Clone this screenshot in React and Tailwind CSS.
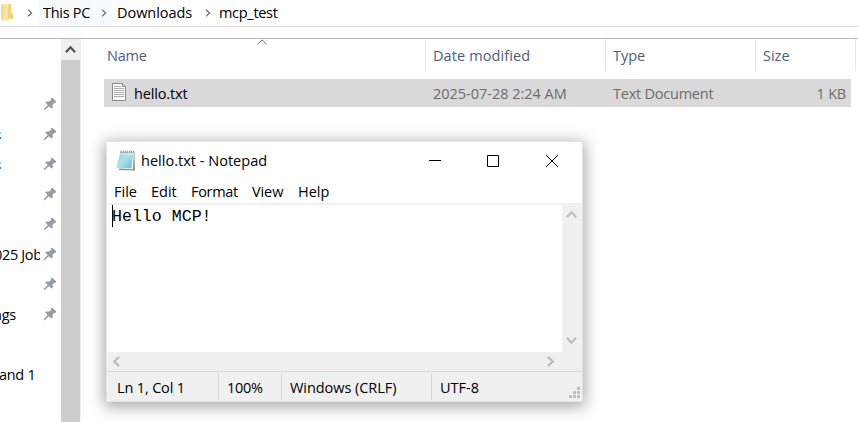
import React from "react";

const ui = "font-['Open_Sans','Noto_Sans',sans-serif]";

function Chevron({ dir = "right", size = 8, color = "#6b6b6b", w = 1.6 }) {
  const rot = { right: 0, down: 90, left: 180, up: 270 }[dir];
  return (
    <svg width={size} height={size} viewBox="0 0 10 10" className="block shrink-0" fill="none">
      <path d="M2.6 0.8 L7 5 L2.6 9.2" stroke={color} strokeWidth={w} transform={`rotate(${rot} 5 5)`} />
    </svg>
  );
}

function Pin() {
  return (
    <svg width="14" height="14" viewBox="0 0 14 14" className="block shrink-0">
      <path
        fill="#929da6"
        d="M9 0.5 L13.3 4.6 L12.4 5.9 L11.3 5.8 L9.6 7.7 L9.8 10.4 L8.5 11.5 L5.9 9.2 L1.8 13 L0.7 13.2 L0.9 12 L4.7 8 L2.3 5.6 L3.5 4.4 L6.2 4.5 L8 2.9 L7.8 1.7 Z"
      />
    </svg>
  );
}

function DocIcon() {
  return (
    <svg width="16" height="20" viewBox="0 0 16 20" className="block shrink-0">
      <path d="M1.5 1.5 H11.5 L14.5 4.5 V18.5 H1.5 Z" fill="#fafafa" stroke="#8b8b8b" />
      <path d="M11.5 1.5 V4.5 H14.5" fill="#e4e4e4" stroke="#8b8b8b" />
      <path d="M3 4.5 H10 M3 6.5 H13 M3 8.5 H13 M3 10.5 H13 M3 12.5 H13 M3 14.5 H13" stroke="#adadad" />
    </svg>
  );
}

function NotepadIcon() {
  return (
    <svg width="20" height="21" viewBox="0 0 20 21" className="block shrink-0">
      <defs>
        <linearGradient id="pad" x1="0" y1="0" x2="1" y2="1">
          <stop offset="0" stopColor="#86c8d9" />
          <stop offset="0.45" stopColor="#b0e2ec" />
          <stop offset="1" stopColor="#6dbbcd" />
        </linearGradient>
      </defs>
      <path d="M6 2 H18.4 L19 20.5 L3 20 Z" fill="#9a8c6c" />
      <path d="M4.5 2 H18 L17 19.3 L1 18.6 Z" fill="#e9eeea" />
      <path d="M4.5 2 H17.3 L15.2 18.2 L0.3 17.6 Z" fill="url(#pad)" />
      <path d="M4.4 4 H17" stroke="#dff4f7" strokeWidth="1" />
      <path d="M4.5 1.7 H18" stroke="#7a8286" strokeWidth="2" strokeDasharray="1 1.1" />
    </svg>
  );
}

const pinned = ["", "", "", "", "", "025 Job", "", "ngs"];

function Sidebar() {
  return (
    <nav className="relative flex w-[61px] shrink-0 flex-col overflow-hidden pt-[50px]">
      {pinned.map((t, i) => (
        <div key={i} className="flex h-[30px] items-center">
          <div className="flex h-[30px] w-[40px] shrink-0 items-center overflow-hidden pt-[2px]">
            {(i === 1 || i === 2) && (
              <span className="flex flex-col gap-[3px]">
                <i className="block h-[2px] w-[1px] bg-[#7dd0f5]" />
                <i className="block h-[2px] w-[1px] bg-[#1583d8]" />
              </span>
            )}
            {t === "025 Job" && <span className="-ml-[6px] whitespace-nowrap tracking-[-0.35px]">{t}</span>}
            {t === "ngs" && <span className="-ml-[7px] whitespace-nowrap tracking-[-0.2px]">{t}</span>}
          </div>
          <div className="ml-[3px]"><Pin /></div>
        </div>
      ))}
      <div className="mt-[31px] -ml-px flex h-[30px] items-center whitespace-nowrap tracking-[-0.3px]">and 1</div>
    </nav>
  );
}

function Notepad() {
  return (
    <section className="absolute left-[106px] top-[141px] flex h-[261px] w-[477px] flex-col border border-[#e4e4e4] bg-[#f0f0f0] text-black shadow-[0_3px_14px_2px_rgba(0,0,0,0.34)]">
      <header className="flex h-[37px] shrink-0 items-center bg-white pl-[9px]">
        <NotepadIcon />
        <span className="ml-[5px] w-[288px] whitespace-nowrap tracking-[0.02px]">hello.txt - Notepad</span>
        <svg width="130" height="13" viewBox="0 0 130 13" className="-mt-px block shrink-0" fill="none" stroke="#000">
          <path d="M0 6.5 H12" />
          <path d="M58.5 1.5 H69.5 V12.5 H58.5 Z" />
          <path d="M117 1 L129 13 M129 1 L117 13" />
        </svg>
      </header>
      <div className="flex h-[24px] shrink-0 items-center whitespace-nowrap bg-white pl-[7px] pt-[2px]">
        <span className="w-[37px] tracking-[0px]">File</span>
        <span className="w-[40px] tracking-[0px]">Edit</span>
        <span className="w-[61px] tracking-[-0.3px]">Format</span>
        <span className="w-[46px] tracking-[-0.1px]">View</span>
        <span className="tracking-[0px]">Help</span>
      </div>
      <div className="flex h-[149px] shrink-0">
        <div className="mt-[2px] flex h-[147px] w-[455px] bg-white pl-[5px]">
          <i className="block h-[22px] w-[1px] bg-black" />
          <span className="-ml-px mt-[2px] h-[20px] whitespace-pre font-['Liberation_Mono',monospace] text-[16.6px] leading-[20px]">Hello MCP!</span>
        </div>
        <div className="flex flex-1 flex-col items-center justify-between pb-[6px] pr-px pt-[6px]">
          <Chevron dir="up" size={11} color="#bdbdbd" w={2} />
          <Chevron dir="down" size={11} color="#bdbdbd" w={2} />
        </div>
      </div>
      <div className="flex h-[19px] shrink-0 items-center justify-between pl-[4px] pr-[26px]">
        <Chevron dir="left" size={11} color="#bdbdbd" w={2} />
        <Chevron dir="right" size={11} color="#bdbdbd" w={2} />
      </div>
      <footer className="flex flex-1 items-center whitespace-nowrap border-t border-[#d7d7d7]">
        <span className="flex h-[26px] w-[112px] items-center border-r border-[#d7d7d7] pl-[10px] pt-[2px] tracking-[-0.15px]">Ln 1, Col 1</span>
        <span className="flex h-[26px] w-[63px] items-center border-r border-[#d7d7d7] pl-[8px] pt-[2px] tracking-[-0.25px]">100%</span>
        <span className="flex h-[26px] w-[150px] items-center border-r border-[#d7d7d7] pl-[8px] pt-[2px] tracking-[-0.05px]">Windows (CRLF)</span>
        <span className="flex h-[26px] w-[137px] items-center pl-[8px] pt-[2px] tracking-[0px]">UTF-8</span>
        <svg width="11" height="11" viewBox="0 0 11 11" className="mt-[12px] block" fill="#bfbfbf">
          <path d="M8 0h3v3h-3zM4 4h3v3h-3zM8 4h3v3h-3zM0 8h3v3h-3zM4 8h3v3h-3zM8 8h3v3h-3z" />
        </svg>
      </footer>
    </section>
  );
}

export default function App() {
  return (
    <main className={`relative flex h-[422px] w-[858px] flex-col overflow-hidden bg-white text-[14.5px] leading-[20px] text-black ${ui}`}>
      <div className="flex h-[27px] shrink-0 items-center whitespace-nowrap border-b border-[#d9d9d9]">
        <svg width="13" height="26" viewBox="0 0 13 26" className="block shrink-0">
          <path d="M1 4 H11 V13 H13 V19 H1 Z" fill="#f3d47c" />
          <path d="M1 4 H8 V21 L1 19 Z" fill="#fde59f" />
          <path d="M1 5 L4 6 V21 L1 19 Z" fill="#f8d985" />
        </svg>
        <div className="flex w-[26px] justify-center pl-[8px]"><Chevron /></div>
        <div className="flex h-[26px] w-[55px] items-center bg-[#f5faff] pl-[4px] tracking-[-0.3px]">This PC</div>
        <div className="ml-px flex h-[26px] w-[17px] items-center justify-center bg-[#f5faff]"><Chevron /></div>
        <span className="w-[84px] pl-[5px] tracking-[-0.05px]">Downloads</span>
        <span className="flex w-[23px] justify-center"><Chevron /></span>
        <span className="tracking-[-0.3px]">mcp_test</span>
      </div>
      <div className="h-[12px] shrink-0 border-b border-[#b9b9b9]" />
      <div className="flex flex-1">
        <Sidebar />
        <div className="flex w-[19px] shrink-0 flex-col bg-[#cdcdcd]">
          <div className="flex h-[21px] items-center justify-center bg-[#f0f0f0]"><Chevron dir="up" size={11} color="#505050" w={2} /></div>
        </div>
        <div className="w-[4px] shrink-0 border-l border-r border-l-[#f0f0f0] border-r-[#f5f5f5]" />
        <div className="w-[774px]">
          <div className="flex h-[32px] items-center whitespace-nowrap text-[#4c607a]">
            <span className="flex h-[32px] w-[342px] items-center border-r border-[#e5e5e5] pl-[23px]">
              <span className="w-[150px] pt-[2px] tracking-[-0.2px]">Name</span>
              <svg width="10" height="6" viewBox="0 0 10 6" className="mb-[27px] block" fill="none" stroke="#666">
                <path d="M0.5 5.2 L5 0.9 L9.5 5.2" />
              </svg>
            </span>
            <span className="flex h-[32px] w-[180px] items-center border-r border-[#e5e5e5] pl-[7px] pt-[2px] tracking-[0.1px]">Date modified</span>
            <span className="flex h-[32px] w-[150px] items-center border-r border-[#e5e5e5] pl-[7px] pt-[2px]">Type</span>
            <span className="flex h-[32px] w-[100px] items-center border-r border-[#e5e5e5] pl-[7px] pt-[2px]">Size</span>
          </div>
          <div className="ml-[20px] mt-[8px] flex h-[28px] w-[747px] items-center whitespace-nowrap bg-[#d9d9d9] pl-[7px] text-[#6d6d6d]">
            <span className="-mt-[2px]"><DocIcon /></span>
            <span className="w-[306px] pl-[7px] pt-[2px] tracking-[-0.15px] text-black">hello.txt</span>
            <span className="w-[180px] pt-[2px] tracking-[-0.02px]">2025-07-28 2:24 AM</span>
            <span className="w-[180px] pt-[2px] tracking-[-0.23px]">Text Document</span>
            <span className="flex-1 pr-[5px] pt-[2px] text-right tracking-[-0.2px]">1 KB</span>
          </div>
        </div>
      </div>
      <Notepad />
    </main>
  );
}
